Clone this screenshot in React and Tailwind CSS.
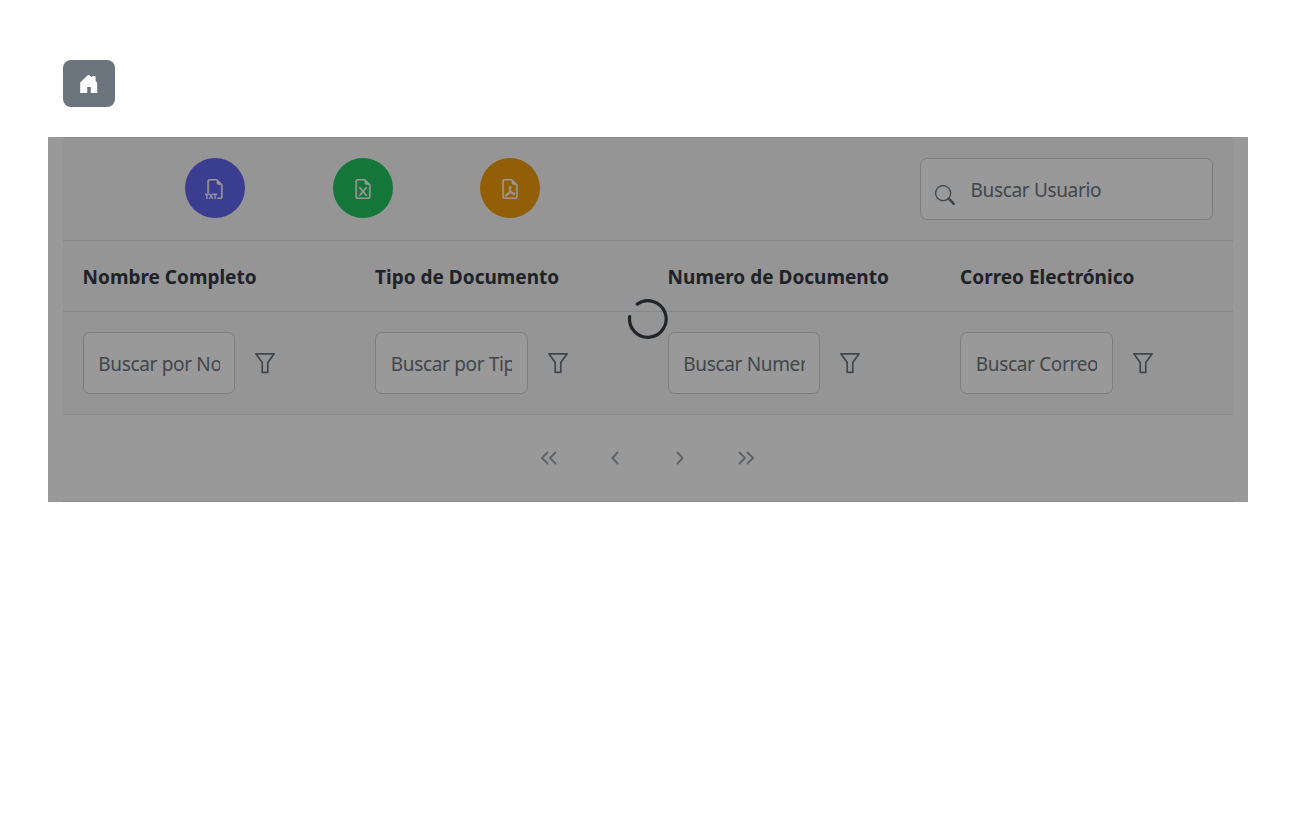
import React from "react";
import { BsFiletypeTxt, BsFileEarmarkExcel, BsFileEarmarkPdf, BsSearch } from "react-icons/bs";

const columns = [
  { title: "Nombre Completo", hint: "Buscar por Nombre" },
  { title: "Tipo de Documento", hint: "Buscar por Tipo" },
  { title: "Numero de Documento", hint: "Buscar Numero" },
  { title: "Correo Electrónico", hint: "Buscar Correo" },
];

const exportsList = [
  { label: "TXT", Icon: BsFiletypeTxt, color: "bg-[#6366f1]" },
  { label: "Excel", Icon: BsFileEarmarkExcel, color: "bg-[#22c55e]" },
  { label: "PDF", Icon: BsFileEarmarkPdf, color: "bg-[#f59e0b]" },
];

function HouseIcon() {
  return (
    <svg width="20" height="20" viewBox="0 0 20 20" fill="currentColor">
      <path d="M8.7 1.3Q9.6 0.6 10.5 1.3L13 3.5V2H16.6V6.9L18.2 8.6V19H11.8V13H8.2V19H1.2V8.4Z" />
    </svg>
  );
}

function FilterIcon() {
  return (
    <svg width="20" height="22" viewBox="0 0 20 22" fill="none" stroke="#6c757d" strokeWidth="1.7" strokeLinejoin="round">
      <path d="M0.9 1.8H19.1L12.8 10.6V20.3H7.2V10.6Z" />
    </svg>
  );
}

function Angle({ d, width, label }) {
  return (
    <button aria-label={label} className="flex h-[60px] w-[60px] items-center justify-center">
      <svg width={width} height="14" viewBox={`0 0 ${width} 14`} fill="none" stroke="#a1a6ab" strokeWidth="1.9" strokeLinecap="round" strokeLinejoin="round">
        <path d={d} />
      </svg>
    </button>
  );
}

export default function App() {
  return (
    <div className="min-h-screen w-full bg-white px-12 pt-[60px] font-['Noto_Sans',sans-serif] text-[19px] leading-7 text-[#212529]">
      <button aria-label="Inicio" className="ml-[15px] flex h-[47px] w-[52px] items-center justify-center rounded-lg bg-[#6c757d] text-white">
        <HouseIcon />
      </button>

      <main className="relative mt-[30px] h-[365px] w-[1200px] px-[15px]">
        <div className="flex h-[104px] items-start justify-between border-y border-[#dee2e6] bg-[#f8f9fa] pt-5 pr-5 pl-[122px]">
          <div className="flex gap-[87.5px]">
            {exportsList.map(({ label, Icon, color }) => (
              <button key={label} aria-label={label} className={`flex size-[60px] items-center justify-center rounded-full pt-0.5 text-white ${color}`}>
                <Icon size={20} strokeWidth={0.35} />
              </button>
            ))}
          </div>
          <label className="flex h-[62px] w-[293px] items-center rounded-[7px] border border-[#ced4da] bg-white pl-[13.5px]">
            <BsSearch size={20} className="mt-3 shrink-0 text-[#6c757d]" />
            <input placeholder="Buscar Usuario" className="ml-4 w-[220px] pt-0.5 tracking-[-0.34px] outline-none placeholder:text-[#6c757d]" />
          </label>
        </div>

        <div className="grid h-[71px] grid-cols-4 items-center border-b border-[#dee2e6] bg-[#f8f9fa] font-bold">
          {columns.map((c) => (
            <div key={c.title} className="pt-0.5 pl-[19.6px] whitespace-nowrap text-[#343a40]">{c.title}</div>
          ))}
        </div>

        <div className="grid h-[103px] grid-cols-4 items-center border-b border-[#dee2e6] bg-[#f8f9fa]">
          {columns.map((c) => (
            <div key={c.title} className="flex items-center gap-5 pl-[19.8px]">
              <input placeholder={c.hint} className="h-[62px] w-[152.4px] rounded-[7px] border border-[#ced4da] bg-white px-[14.5px] pt-0.5 tracking-[-0.34px] outline-none placeholder:text-[#6c757d]" />
              <FilterIcon />
            </div>
          ))}
        </div>

        <nav className="flex h-[87px] items-center justify-center gap-[5.5px] border-b border-[#dee2e6] pr-px">
          <Angle label="Primera" width="18" d="M7.5 1.5L2 7L7.5 12.5M15.5 1.5L10 7L15.5 12.5" />
          <Angle label="Anterior" width="8" d="M6.5 1.5L1.5 7L6.5 12.5" />
          <Angle label="Siguiente" width="8" d="M1.5 1.5L6.5 7L1.5 12.5" />
          <Angle label="Última" width="18" d="M2.5 1.5L8 7L2.5 12.5M10.5 1.5L16 7L10.5 12.5" />
        </nav>

        <div className="absolute inset-0 flex items-center justify-center bg-black/40 pb-px">
          <svg width="40" height="40" viewBox="0 0 40 40" fill="none" stroke="#212529" strokeWidth="3.2" strokeLinecap="round">
            <path d="M9.2 5.1A18.3 18.3 0 1 1 1.7 17.6" />
          </svg>
        </div>
      </main>
    </div>
  );
}
